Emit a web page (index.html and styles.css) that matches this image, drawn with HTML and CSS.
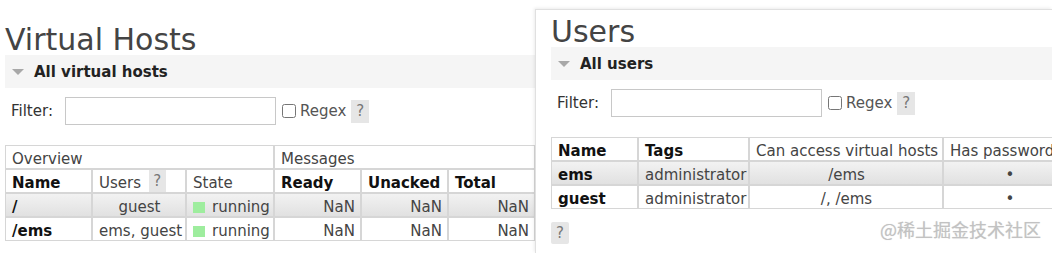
FILE: index.html
```html
<!DOCTYPE html>
<html lang="en">
  <head>
    <meta charset="UTF-8" />
    <meta name="viewport" content="width=device-width, initial-scale=1.0" />
    <title>RabbitMQ Management</title>
    <link rel="stylesheet" href="styles.css">
  </head>
  <body>
    <div class="panel vhosts">
      <h1>Virtual Hosts</h1>
      <div class="section_head"><span class="arrow"></span>All virtual hosts</div>
      <div class="filter">
        <label for="vhostFilter">Filter:</label>
        <input type="text" id="vhostFilter" />
        <label class="regex"><input type="checkbox" /> Regex</label>
        <span class="help">?</span>
      </div>
      <table class="list vhost_list">
        <colgroup>
          <col class="w_name" />
          <col class="w_users" />
          <col class="w_state" />
          <col class="w_num" />
          <col class="w_num" />
          <col class="w_num" />
        </colgroup>
        <thead>
          <tr>
            <th colspan="3">Overview</th>
            <th colspan="3">Messages</th>
          </tr>
          <tr>
            <th class="sort">Name</th>
            <th>Users <span class="help">?</span></th>
            <th>State</th>
            <th class="sort">Ready</th>
            <th class="sort">Unacked</th>
            <th class="sort">Total</th>
          </tr>
        </thead>
        <tbody>
          <tr class="alt1">
            <td class="name">/</td>
            <td class="c">guest</td>
            <td><span class="state_ok"></span>running</td>
            <td class="r">NaN</td>
            <td class="r">NaN</td>
            <td class="r">NaN</td>
          </tr>
          <tr class="alt2">
            <td class="name">/ems</td>
            <td class="c">ems, guest</td>
            <td><span class="state_ok"></span>running</td>
            <td class="r">NaN</td>
            <td class="r">NaN</td>
            <td class="r">NaN</td>
          </tr>
        </tbody>
      </table>
    </div>

    <div class="panel users">
      <h1>Users</h1>
      <div class="section_head"><span class="arrow"></span>All users</div>
      <div class="filter">
        <label for="userFilter">Filter:</label>
        <input type="text" id="userFilter" />
        <label class="regex"><input type="checkbox" /> Regex</label>
        <span class="help">?</span>
      </div>
      <table class="list user_list">
        <colgroup>
          <col class="w_uname" />
          <col class="w_tags" />
          <col class="w_access" />
          <col class="w_pass" />
        </colgroup>
        <thead>
          <tr>
            <th class="sort">Name</th>
            <th class="sort">Tags</th>
            <th>Can access virtual hosts</th>
            <th>Has password</th>
          </tr>
        </thead>
        <tbody>
          <tr class="alt1">
            <td class="name">ems</td>
            <td>administrator</td>
            <td class="c">/ems</td>
            <td class="c">&bull;</td>
          </tr>
          <tr class="alt2">
            <td class="name">guest</td>
            <td>administrator</td>
            <td class="c">/, /ems</td>
            <td class="c">&bull;</td>
          </tr>
        </tbody>
      </table>
      <span class="help help_block">?</span>
    </div>

    <div class="watermark">@稀土掘金技术社区</div>
  </body>
</html>
```

FILE: styles.css
```css
body {
  margin: 0;
  width: 1052px;
  height: 253px;
  overflow: hidden;
  position: relative;
  background: #fff;
  font-family: "DejaVu Sans", Verdana, sans-serif;
  font-size: 15px;
  color: #484848;
}

.panel {
  background: #fff;
}
.vhosts {
  width: 530px;
  padding: 25px 0 0 5px;
  overflow: hidden;
}
/* second window sits over the first one */
.users {
  position: absolute;
  left: 535px;
  top: 9px;
  right: 0;
  bottom: 0;
  padding: 7px 0 0 15px;
  overflow: hidden;
  border-top: 1px solid #e0e0e0;
  border-left: 1px solid #e0e0e0;
  box-shadow: -1px -1px 3px rgba(0, 0, 0, 0.08);
}

h1 {
  margin: 0;
  font-size: 30px;
  font-weight: normal;
  line-height: 30px;
  color: #444;
}

.section_head {
  display: flex;
  align-items: center;
  height: 33px;
  padding-left: 7px;
  background: #f5f5f5;
  font-size: 15px;
  font-weight: bold;
  color: #222;
}
.arrow {
  width: 0;
  height: 0;
  border-left: 6.5px solid transparent;
  border-right: 6.5px solid transparent;
  border-top: 6px solid #a8a8a8;
  margin: 1px 10px 0 0;
}

.filter {
  display: flex;
  align-items: center;
  height: 28px;
  margin-top: 9px;
  padding-left: 6px;
  color: #333;
}
.filter input[type="text"] {
  width: 211px;
  height: 28px;
  box-sizing: border-box;
  margin: 0 0 0 12px;
  padding: 0 4px;
  border: 1px solid #c8c8c8;
  outline: none;
}
.regex {
  display: flex;
  align-items: center;
  color: #555;
}
.regex input {
  width: 14px;
  height: 14px;
  margin: 0 4px 0 6px;
}

.help {
  display: inline-block;
  width: 18px;
  height: 23px;
  line-height: 23px;
  margin-left: 5px;
  text-align: center;
  background: #e6e6e6;
  color: #777;
}

table.list {
  margin-top: 20px;
  border-spacing: 0;
  border-collapse: separate;
  table-layout: fixed;
}
.vhost_list {
  width: 530px;
}
.user_list {
  width: 525px;
}
.w_name { width: 87px; }
.w_users { width: 94px; }
.w_state { width: 88px; }
.w_num { width: 87px; }
.w_uname { width: 87px; }
.w_tags { width: 111px; }
.w_access { width: 194px; }
.w_pass { width: 133px; }

.list th,
.list td {
  box-sizing: border-box;
  padding: 4px 5px 0 6px;
  height: 24px;
  line-height: 18px;
  border: 1px solid #d6d6d6;
  text-align: left;
  white-space: nowrap;
  overflow: hidden;
  font-weight: normal;
  color: #444;
}
.list th.sort,
.list td.name {
  font-weight: bold;
  color: #111;
}
.list th .help {
  height: 22px;
  line-height: 22px;
  width: 17px;
  margin: -4px 0 0 3px;
  vertical-align: top;
}
.list td.c {
  text-align: center;
}
.list td.r {
  text-align: right;
}
.list tr.alt1 td {
  background: linear-gradient(#f2f2f2, #e1e1e1);
}

.state_ok {
  display: inline-block;
  width: 12px;
  height: 11px;
  margin-right: 7px;
  vertical-align: -1px;
  background: #9eed9e;
}

.help_block {
  display: block;
  width: 18px;
  height: 22px;
  line-height: 22px;
  margin: 13px 0 0;
  border-radius: 2px;
}

.watermark {
  position: absolute;
  left: 880px;
  top: 216px;
  font-family: "Noto Sans CJK SC", sans-serif;
  font-size: 18px;
  color: #c2c2c2;
  text-shadow: 0 0 1px rgba(0, 0, 0, 0.15);
}
```
